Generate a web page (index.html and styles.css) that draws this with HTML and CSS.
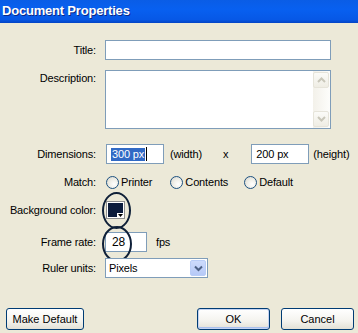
FILE: index.html
```html
<!doctype html>
<html lang="en">
 <head>
  <meta charset="UTF-8">
  <title>Document Properties</title>
  <link rel="stylesheet" href="styles.css">
 </head>
 <body>
  <div class="dialog">
   <div class="titlebar">Document Properties</div>
   <div class="form">
    <div class="row row-title">
     <label class="lbl">Title:</label>
     <div class="field field-wide"></div>
    </div>
    <div class="row row-desc">
     <label class="lbl">Description:</label>
     <div class="field field-area">
      <div class="scroll">
       <div class="sbtn"><svg width="9" height="6" viewBox="0 0 9 6"><path d="M1 5 L4.5 1.5 L8 5" fill="none" stroke="#c9c7ba" stroke-width="2"/></svg></div>
       <div class="strack"></div>
       <div class="sbtn"><svg width="9" height="6" viewBox="0 0 9 6"><path d="M1 1 L4.5 4.5 L8 1" fill="none" stroke="#c9c7ba" stroke-width="2"/></svg></div>
      </div>
     </div>
    </div>
    <div class="row row-dim">
     <label class="lbl">Dimensions:</label>
     <div class="field field-num"><span class="sel">300 px</span><span class="caret"></span></div>
     <span class="unit">(width)</span>
     <span class="times">x</span>
     <div class="field field-num">200 px</div>
     <span class="unit unit-h">(height)</span>
    </div>
    <div class="row row-match">
     <label class="lbl">Match:</label>
     <span class="radio"></span><span class="opt opt-printer">Printer</span>
     <span class="radio"></span><span class="opt opt-contents">Contents</span>
     <span class="radio"></span><span class="opt">Default</span>
    </div>
    <div class="row row-bg">
     <label class="lbl">Background color:</label>
     <div class="swatch">
      <div class="swatch-fill"></div>
      <svg class="swatch-arrow" width="7" height="5" viewBox="0 0 7 5"><rect width="7" height="5" fill="#fff"/><path d="M1 1 H6 L3.5 4 Z" fill="#000"/></svg>
      <span class="mark mark-swatch"></span>
     </div>
    </div>
    <div class="row row-fps">
     <label class="lbl">Frame rate:</label>
     <div class="field field-fps">28<span class="mark mark-fps"></span></div>
     <span class="fps">fps</span>
    </div>
    <div class="row row-ruler">
     <label class="lbl">Ruler units:</label>
     <div class="field field-select">
      <span>Pixels</span>
      <span class="dd"><svg width="9" height="7" viewBox="0 0 9 7"><path d="M1 1.5 L4.5 5 L8 1.5" fill="none" stroke="#4d6185" stroke-width="2"/></svg></span>
     </div>
    </div>
    <div class="buttons">
     <button class="btn btn-default">Make Default</button>
     <div class="spacer"></div>
     <button class="btn btn-ok">OK</button>
     <button class="btn">Cancel</button>
    </div>
   </div>
  </div>
 </body>
</html>
```

FILE: styles.css
```css
* {
  margin: 0;
  padding: 0;
  box-sizing: border-box;
}

body {
  background: #ece9d8;
  font-family: 'Liberation Sans', Arial, sans-serif;
  font-size: 11px;
  letter-spacing: -0.15px;
  color: #000;
  width: 358px;
  height: 333px;
  overflow: hidden;
}

.titlebar {
  height: 23px;
  padding: 3px 0 0 2px;
  background: linear-gradient(180deg, #0a5de6 0%, #0860f0 40%, #0758e6 85%, #0444c4 100%);
  color: #fff;
  font-family: 'Liberation Sans', Arial, sans-serif;
  font-weight: bold;
  font-size: 13px;
  letter-spacing: -0.2px;
  text-shadow: 1px 1px 0 #0a2a88;
}

.form {
  padding-top: 17px;
}

.row {
  display: flex;
  align-items: center;
  height: 20px;
}

.lbl {
  width: 96px;
  text-align: right;
  margin-right: 9px;
  flex-shrink: 0;
}

.field {
  background: #fff;
  border: 1px solid #7f9db9;
  height: 20px;
  display: flex;
  align-items: center;
  position: relative;
}

.field-wide {
  width: 226px;
}

.row-desc {
  margin-top: 10px;
  height: 59px;
  align-items: flex-start;
}

.row-desc .lbl {
  padding-top: 2px;
}

.field-area {
  width: 226px;
  height: 59px;
  justify-content: flex-end;
  align-items: stretch;
}

.scroll {
  width: 17px;
  padding: 1px 1px 1px 0;
  display: flex;
  flex-direction: column;
  background: linear-gradient(90deg, #f3f1ea, #fdfdfb);
}

.sbtn {
  height: 16px;
  border: 1px solid #e6e4da;
  border-radius: 2px;
  background: linear-gradient(180deg, #fbfbf8, #efede4);
  display: flex;
  align-items: center;
  justify-content: center;
}

.strack {
  flex: 1;
}

.row-dim {
  margin-top: 15px;
}

.field-num {
  width: 58px;
  padding-left: 4px;
}

.row-dim .field-num:first-of-type {
  margin-left: 1px;
}

.sel {
  background: #316ac5;
  color: #fff;
  line-height: 13px;
  padding: 0 1px;
}

.caret {
  width: 1px;
  height: 14px;
  background: #000;
  margin-left: 1px;
}

.unit {
  margin-left: 6px;
}

.times {
  margin: 0 23px 0 21px;
}

.unit-h {
  margin-left: 4px;
}

.row-match {
  margin-top: 8px;
}

.radio {
  width: 13px;
  height: 13px;
  border-radius: 50%;
  border: 1px solid #1c5180;
  background: radial-gradient(circle at 65% 65%, #fff 0%, #f0efe8 45%, #d4d3cb 100%);
  flex-shrink: 0;
}

.row-match .radio:first-of-type {
  margin-left: 1px;
}

.opt {
  margin-left: 2px;
}

.opt-printer {
  margin-right: 18px;
}

.opt-contents {
  margin-right: 16px;
}

.row-bg {
  margin-top: 8px;
}

.swatch {
  position: relative;
  width: 19px;
  height: 18px;
  margin-left: 1px;
  border: 1px solid #8e8f8f;
  background: #fff;
  padding: 1px;
}

.swatch-fill {
  width: 100%;
  height: 100%;
  background: #0c1c3c;
}

.swatch-arrow {
  position: absolute;
  right: 0;
  bottom: 0;
}

.mark {
  position: absolute;
  border: 2px solid #0f2038;
  border-radius: 50%;
  pointer-events: none;
}

.mark-swatch {
  left: -5px;
  top: -10px;
  width: 29px;
  height: 37px;
}

.row-fps {
  margin-top: 12px;
}

.field-fps {
  width: 42px;
  padding-left: 6px;
  font-size: 12px;
}

.mark-fps {
  left: -4px;
  top: -7px;
  width: 30px;
  height: 36px;
}

.fps {
  margin-left: 9px;
}

.row-ruler {
  margin-top: 6px;
}

.field-select {
  width: 103px;
  padding-left: 3px;
  justify-content: space-between;
  padding-right: 1px;
}

.dd {
  width: 16px;
  height: 16px;
  background: linear-gradient(180deg, #cddbfc, #b6c9f7);
  border: 1px solid #b9cdf7;
  border-radius: 2px;
  display: flex;
  align-items: center;
  justify-content: center;
}

.buttons {
  display: flex;
  margin-top: 30px;
  padding: 0 4px 0 6px;
  gap: 11px;
}

.spacer {
  flex: 1;
}

.btn {
  height: 22px;
  width: 73px;
  border: 1px solid #003c74;
  border-radius: 3px;
  background: linear-gradient(180deg, #ffffff 0%, #f4f3ee 60%, #e3e1d6 100%);
  font-family: 'Liberation Sans', Arial, sans-serif;
  font-size: 11px;
  color: #000;
}

.btn-default {
  width: 78px;
}

.btn-ok {
  box-shadow: inset 0 0 0 1px #c4d3f2, inset 0 -1px 0 1px #a9c0ee;
}
```
